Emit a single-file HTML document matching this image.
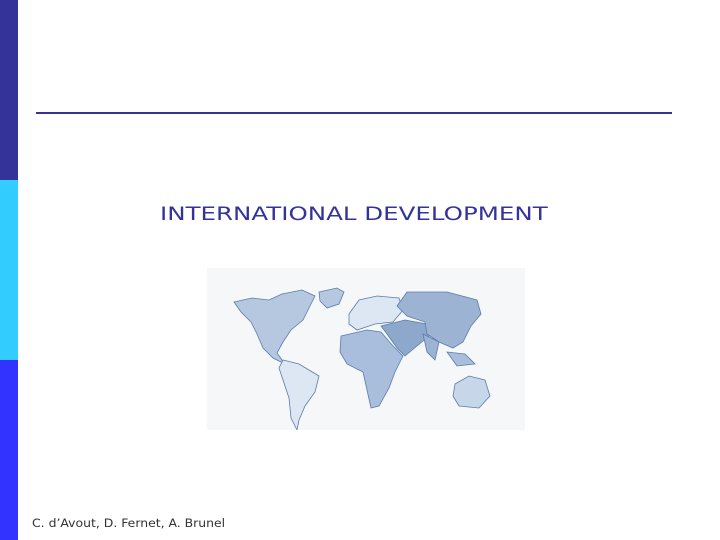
<!DOCTYPE html>
<html><head><style>
body{margin:0;width:720px;height:540px;background:#fff;position:relative;overflow:hidden;font-family:"DejaVu Sans","Liberation Sans",sans-serif}
.b{position:absolute;left:0;width:18px}
</style></head><body>
<div class="b" style="top:0;height:180px;background:#333399"></div>
<div class="b" style="top:180px;height:180px;background:#33ccff"></div>
<div class="b" style="top:360px;height:180px;background:#3333ff"></div>
<div style="position:absolute;left:36px;top:112px;width:636px;height:2px;background:#333399"></div>
<div style="position:absolute;left:160px;top:203px;font-size:19px;color:#333399;white-space:nowrap;transform:scaleX(1.29);transform-origin:0 0">INTERNATIONAL DEVELOPMENT</div>
<svg style="position:absolute;left:207px;top:268px" width="318" height="162" viewBox="200 260 318 162">
<rect x="200" y="260" width="318" height="162" fill="#f5f7f9"/>
<g stroke="#5a7ca8" stroke-width="0.8">
<path d="M227 294 L245 290 L262 292 L275 286 L295 282 L308 288 L302 300 L296 312 L284 322 L276 334 L270 345 L278 356 L266 350 L256 340 L250 326 L244 314 L234 304 Z" fill="#b6c8e0"/>
<path d="M312 284 L330 280 L337 284 L332 296 L320 300 L313 293 Z" fill="#b6c8e0"/>
<path d="M276 352 L292 356 L312 368 L308 384 L298 398 L292 412 L290 422 L284 410 L282 390 L276 372 L272 360 Z" fill="#dde6f3"/>
<path d="M342 306 L352 292 L370 288 L392 290 L396 302 L386 314 L368 316 L350 322 L342 316 Z" fill="#dde6f3"/>
<path d="M334 328 L360 322 L374 324 L386 338 L396 348 L388 364 L382 380 L372 398 L364 400 L360 382 L356 364 L340 356 L333 344 Z" fill="#a8bedc"/>
<path d="M374 318 L398 312 L420 316 L422 328 L410 338 L398 348 L390 340 L380 326 Z" fill="#8ea8cc"/>
<path d="M390 298 L400 284 L440 284 L470 292 L474 306 L464 318 L456 334 L446 340 L432 334 L420 326 L418 314 L400 308 Z" fill="#9db3d4"/>
<path d="M416 326 L432 334 L428 352 L420 344 Z" fill="#9db3d4"/>
<path d="M440 344 L458 346 L468 356 L450 358 Z" fill="#a8bedc"/>
<path d="M448 376 L462 368 L478 372 L483 388 L472 400 L452 398 L446 388 Z" fill="#c8d6ea"/>
</g>
</svg>
<div style="position:absolute;left:32px;top:516px;font-size:11.5px;color:#333;white-space:nowrap;transform:scaleX(1.08);transform-origin:0 0">C. d’Avout, D. Fernet, A. Brunel</div>
</body></html>
